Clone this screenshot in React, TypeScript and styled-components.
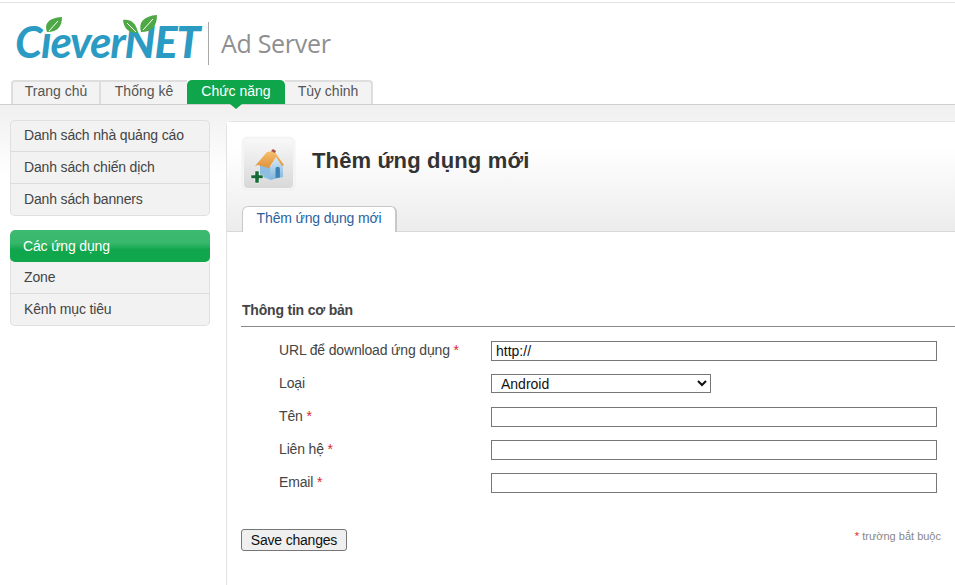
import React from "react";
import styled, { createGlobalStyle } from "styled-components";

const Global = createGlobalStyle`
  html, body { margin: 0; padding: 0; height: 585px; overflow: hidden; background: #fff; }
  body { font-family: "Liberation Sans", Arial, sans-serif; font-size: 14px; color: #444; }
  * { box-sizing: border-box; }
`;

const Page = styled.div`
  width: 955px;
  height: 585px;
  overflow: hidden;
  border-top: 1px solid #e2e2e2;
  margin-top: 2px;
  display: flex;
  flex-direction: column;
`;
const Header = styled.header`
  height: 77px;
  padding: 0 0 0 15px;
  display: flex;
  align-items: flex-start;
`;
const Logo = styled.div`
  position: relative;
  width: 185px;
  height: 60px;
  padding-top: 13px;
  font-family: "Lato", "Liberation Sans", sans-serif;
  font-style: italic;
  font-weight: 700;
  font-size: 44px;
  line-height: 50px;
  letter-spacing: -1.2px;
  color: #2b9bc3;
  white-space: nowrap;
`;
const LogoStrong = styled.span`
  font-size: 43px;
  font-weight: 900;
  letter-spacing: -1px;
`;
const LogoLeaves = styled.svg`
  position: absolute;
  left: 0;
  top: 0;
`;
const LogoDivider = styled.div`
  width: 1px;
  height: 43px;
  margin: 19px 12px 0 8px;
  background: #a8a8a8;
`;
const Product = styled.div`
  margin-top: 23px;
  font-family: "Open Sans", "Liberation Sans", sans-serif;
  font-size: 25px;
  line-height: 34px;
  color: #8f8f8f;
  letter-spacing: -0.3px;
  white-space: nowrap;
`;
const Nav = styled.nav`
  height: 24px;
  padding-left: 11px;
  display: flex;
  position: relative;
  z-index: 1;
`;
const NavTab = styled.div<{ $w: number; $active?: boolean; $first?: boolean; $last?: boolean }>`
  position: relative;
  width: ${(p) => p.$w}px;
  height: 24px;
  line-height: 19px;
  text-align: center;
  font-size: 14px;
  white-space: nowrap;
  color: ${(p) => (p.$active ? "#fff" : "#555")};
  background: ${(p) => (p.$active ? "#0fa54b" : "#f3f3f3")};
  border: ${(p) => (p.$active ? "0" : "2px solid #dedede")};
  border-left-width: ${(p) => (p.$first ? "2px" : "0")};
  border-right-width: ${(p) => (p.$first || p.$last ? "2px" : "0")};
  border-bottom: 0;
  border-radius: ${(p) => (p.$active ? "5px 5px 0 0" : p.$first ? "4px 0 0 0" : p.$last ? "0 4px 0 0" : "0")};
  ${(p) =>
    p.$active
      ? `line-height: 22px;
  &::after {
    content: "";
    position: absolute;
    left: 50%;
    bottom: -5px;
    margin-left: -6px;
    border: 6px solid transparent;
    border-bottom: 0;
    border-top: 5px solid #0fa54b;
  }`
      : ""}
`;
const Body = styled.div`
  flex: 1;
  display: flex;
  gap: 16px;
  padding: 15px 0 0 10px;
  border-top: 1px solid #d0d0d0;
  background: linear-gradient(#f0f0f0 0, #fff 70px);
`;
const Sidebar = styled.aside`
  width: 200px;
  flex: none;
  display: flex;
  flex-direction: column;
  gap: 14px;
`;
const Group = styled.div`
  display: flex;
  flex-direction: column;
  border-radius: 5px;
  background: #f2f2f2;
  box-shadow: inset 0 0 0 1px #e0e0e0;
  overflow: hidden;
`;
const Item = styled.div`
  height: 32px;
  padding-left: 14px;
  line-height: 30px;
  font-size: 14px;
  letter-spacing: -0.16px;
  color: #444;
  border-bottom: 1px solid #dcdcdc;
  white-space: nowrap;
  &:last-child { border-bottom: 0; }
`;
const GroupHead = styled.div`
  height: 32px;
  padding-left: 13px;
  line-height: 32px;
  font-size: 14px;
  letter-spacing: -0.16px;
  color: #fff;
  border-radius: 5px;
  background: linear-gradient(#3dbb70 0, #38b86c 40%, #10a64c 62%, #10a64c 100%);
  white-space: nowrap;
`;
const Main = styled.main`
  flex: 1;
  margin: 1px -20px 0 0;
  background: #fff;
  border: 1px solid #e2e2e2;
  border-right: 0;
  border-bottom: 0;
  border-radius: 6px 0 0 0;
  display: flex;
  flex-direction: column;
`;
const Banner = styled.div`
  height: 110px;
  padding: 15px 0 0 15px;
  background: linear-gradient(#fff 0, #fff 25px, #ececec 100%);
  border-bottom: 1px solid #d8d8d8;
  position: relative;
`;
const TitleRow = styled.div`
  display: flex;
  align-items: center;
  gap: 17px;
`;
const IconBox = styled.div`
  width: 53px;
  height: 53px;
  border-radius: 6px;
  border: 2px solid #f4f4f4;
  background: linear-gradient(#f8f8f8, #d8d8d8);
  box-shadow: 0 0 1px #ccc;
  display: flex;
  align-items: center;
  justify-content: center;
`;
const Title = styled.h1`
  margin: 0 0 6px;
  font-size: 22px;
  line-height: 30px;
  font-weight: 700;
  letter-spacing: 0.15px;
  color: #333;
  white-space: nowrap;
`;
const SubTab = styled.div`
  position: absolute;
  left: 15px;
  bottom: -1px;
  width: 155px;
  height: 26px;
  line-height: 23px;
  text-align: center;
  font-size: 14px;
  letter-spacing: -0.16px;
  color: #2a62a0;
  background: #fff;
  border: 1px solid #c8c8c8;
  border-width: 1px 2px 0 1px;
  border-radius: 6px 6px 0 0;
  white-space: nowrap;
`;
const Content = styled.div`
  flex: 1;
  padding: 69px 0 0 15px;
`;
const SectionTitle = styled.div`
  height: 26px;
  font-size: 14px;
  font-weight: 700;
  line-height: 18px;
  letter-spacing: -0.2px;
  color: #444;
  border-bottom: 1px solid #888;
  margin-left: -1px;
  padding-left: 1px;
`;
const Form = styled.div`
  display: flex;
  flex-direction: column;
  padding: 14px 0 0 37px;
`;
const Row = styled.div`
  display: flex;
  align-items: flex-start;
  height: 33px;
  font-size: 14px;
  color: #444;
`;
const Label = styled.label`
  width: 212px;
  flex: none;
  line-height: 18px;
  letter-spacing: -0.16px;
  white-space: nowrap;
`;
const Star = styled.span`
  color: #e0242c;
`;
const TextInput = styled.input`
  width: 446px;
  height: 20px;
  padding: 0 4px;
  border: 1px solid #777;
  border-radius: 0;
  background: #fff;
  font: 14px "Liberation Sans", Arial, sans-serif;
  color: #111;
  outline: none;
`;
const Select = styled.select`
  width: 220px;
  height: 19px;
  padding: 0 0 2px 5px;
  border: 1px solid #777;
  border-radius: 0;
  background: #fff;
  font: 14px "Liberation Sans", Arial, sans-serif;
  color: #111;
`;
const Footer = styled.div`
  display: flex;
  justify-content: space-between;
  align-items: flex-start;
  margin: 23px 34px 0 -1px;
`;
const SaveButton = styled.button`
  width: 106px;
  height: 22px;
  padding: 0;
  border: 1px solid #767676;
  border-radius: 3px;
  background: #efefef;
  font: 14px "Liberation Sans", Arial, sans-serif;
  letter-spacing: -0.2px;
  color: #111;
`;
const Note = styled.div`
  margin-top: 1px;
  font-size: 11px;
  line-height: 13px;
  color: #888;
  white-space: nowrap;
`;

export default function App() {
  return (
    <Page>
      <Global />
      <Header>
        <Logo>
          Clever<LogoStrong>NET</LogoStrong>
          <LogoLeaves width="185" height="60" viewBox="0 0 185 60">
            <rect x="30" y="12" width="18" height="19" fill="#fff" />
            <path fill="#4ea845" d="M32 29c-3-8 1-14 15-15 0 9-4 15-15 15z" />
            <path d="M34 28l9-10" stroke="#fff" strokeWidth="1" fill="none" />
            <path fill="#4ea845" d="M108 17c8-1 13 3 15 13-8 0-14-3-15-13z" />
            <path d="M112 20l9 9" stroke="#fff" strokeWidth="1" fill="none" />
            <path fill="#4ea845" d="M126 29c-3-10 3-16 16-17 0 11-5 17-16 17z" />
            <path d="M128 27l10-11" stroke="#fff" strokeWidth="1" fill="none" />
          </LogoLeaves>
        </Logo>
        <LogoDivider />
        <Product>Ad Server</Product>
      </Header>
      <Nav>
        <NavTab $w={90} $first>Trang chủ</NavTab>
        <NavTab $w={86}>Thống kê</NavTab>
        <NavTab $w={98} $active>Chức năng</NavTab>
        <NavTab $w={88} $last>Tùy chỉnh</NavTab>
      </Nav>
      <Body>
        <Sidebar>
          <Group>
            <Item>Danh sách nhà quảng cáo</Item>
            <Item>Danh sách chiến dịch</Item>
            <Item>Danh sách banners</Item>
          </Group>
          <Group>
            <GroupHead>Các ứng dụng</GroupHead>
            <Item>Zone</Item>
            <Item>Kênh mục tiêu</Item>
          </Group>
        </Sidebar>
        <Main>
          <Banner>
            <TitleRow>
              <IconBox>
                <svg width="44" height="44" viewBox="0 0 44 44">
                  <defs>
                    <linearGradient id="wall" x1="0" y1="0" x2="0" y2="1">
                      <stop offset="0" stopColor="#d6eaf7" />
                      <stop offset="1" stopColor="#7fb4da" />
                    </linearGradient>
                    <linearGradient id="roof" x1="0" y1="0" x2="0" y2="1">
                      <stop offset="0" stopColor="#f6c06f" />
                      <stop offset="1" stopColor="#e0913a" />
                    </linearGradient>
                  </defs>
                  <path d="M13 23l11 2v13l-11-4z" fill="#8dbde0" />
                  <path d="M23 26l6-11 7 9v11l-13 3z" fill="url(#wall)" />
                  <path d="M28.500 36V27a2.200 2.200 0 0 1 4.400 0v8.500z" fill="#3f80b5" />
                  <path d="M8 24L20 10l7-1 10 14-2 1-6-9-7 11-11-3z" fill="url(#roof)" />
                  <path d="M24 9l2-2 3 2-1 2z" fill="#a9504a" />
                  <path d="M8 29h4v4h4v3.500h-4V41H8v-4.500H4V33h4z" fill="#156b34" stroke="#fff" strokeWidth="0.5" />
                </svg>
              </IconBox>
              <Title>Thêm ứng dụng mới</Title>
            </TitleRow>
            <SubTab>Thêm ứng dụng mới</SubTab>
          </Banner>
          <Content>
            <SectionTitle>Thông tin cơ bản</SectionTitle>
            <Form>
              <Row>
                <Label>URL để download ứng dụng <Star>*</Star></Label>
                <TextInput defaultValue="http://" />
              </Row>
              <Row>
                <Label>Loại</Label>
                <Select defaultValue="Android">
                  <option>Android</option>
                </Select>
              </Row>
              <Row>
                <Label>Tên <Star>*</Star></Label>
                <TextInput />
              </Row>
              <Row>
                <Label>Liên hệ <Star>*</Star></Label>
                <TextInput />
              </Row>
              <Row>
                <Label>Email <Star>*</Star></Label>
                <TextInput />
              </Row>
            </Form>
            <Footer>
              <SaveButton>Save changes</SaveButton>
              <Note><Star>*</Star> trường bắt buộc</Note>
            </Footer>
          </Content>
        </Main>
      </Body>
    </Page>
  );
}
